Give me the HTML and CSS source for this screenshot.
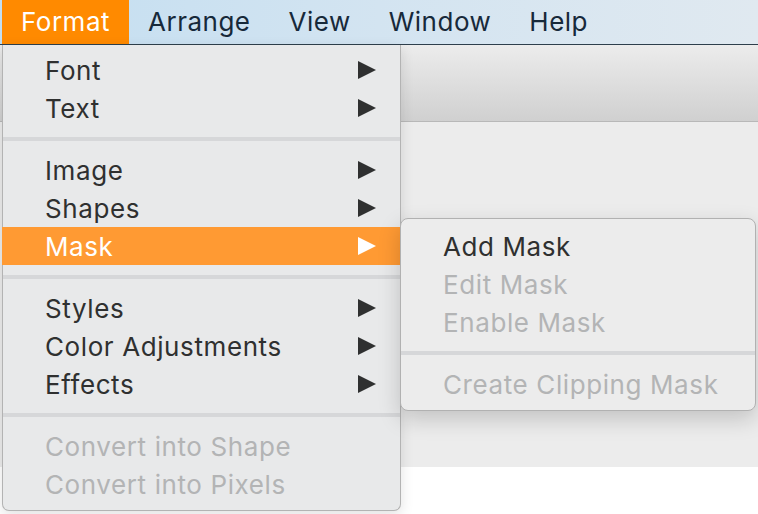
FILE: index.html
```html
<!DOCTYPE html>
<html>
<head>
<meta charset="utf-8">
<link rel="stylesheet" href="styles.css">
</head>
<body>
<div class="menubar">
  <div class="mb-item active">Format</div>
  <div class="mb-item">Arrange</div>
  <div class="mb-item">View</div>
  <div class="mb-item">Window</div>
  <div class="mb-item">Help</div>
</div>
<div class="window">
  <div class="toolbar"></div>
  <div class="canvas"></div>
</div>

<div class="menu">
  <div class="row"><span>Font</span><span class="arrow"></span></div>
  <div class="row"><span>Text</span><span class="arrow"></span></div>
  <div class="sep"></div>
  <div class="row"><span>Image</span><span class="arrow"></span></div>
  <div class="row"><span>Shapes</span><span class="arrow"></span></div>
  <div class="row selected"><span>Mask</span><span class="arrow"></span>
    <div class="submenu">
      <div class="row"><span>Add Mask</span></div>
      <div class="row disabled"><span>Edit Mask</span></div>
      <div class="row disabled"><span>Enable Mask</span></div>
      <div class="sep"></div>
      <div class="row disabled"><span>Create Clipping Mask</span></div>
    </div>
  </div>
  <div class="sep"></div>
  <div class="row"><span>Styles</span><span class="arrow"></span></div>
  <div class="row"><span>Color Adjustments</span><span class="arrow"></span></div>
  <div class="row"><span>Effects</span><span class="arrow"></span></div>
  <div class="sep"></div>
  <div class="row disabled"><span>Convert into Shape</span></div>
  <div class="row disabled"><span>Convert into Pixels</span></div>
</div>
</body>
</html>
```
FILE: styles.css
```css
html, body {
  margin: 0;
  padding: 0;
  width: 758px;
  height: 514px;
  overflow: hidden;
  background: #ffffff;
  font-family: "Inter", "Liberation Sans", sans-serif;
  position: relative;
}

.menubar {
  height: 44px;
  display: flex;
  padding-left: 2px;
  background: linear-gradient(to right, #c3def1 0%, #d3e4f1 50%, #e0e9f0 100%);
  border-bottom: 1px solid #2e3f4c;
}

.mb-item {
  padding: 0 19px;
  font-size: 26px;
  letter-spacing: 0.5px;
  line-height: 44px;
  color: #17293a;
}

.mb-item.active {
  background: #ff8a00;
  color: #ffffff;
}

.window {
  display: flex;
  flex-direction: column;
}

.toolbar {
  height: 76px;
  background: linear-gradient(to bottom, #ececec 0%, #d0d0d0 100%);
  border-bottom: 1px solid #b8b8b8;
}

.canvas {
  height: 345px;
  background: #ececec;
}

.menu {
  position: absolute;
  left: 2px;
  top: 45px;
  width: 397px;
  padding: 6px 0 7px;
  background: #e8e9ea;
  border: 1px solid #b3b3b3;
  border-top: none;
  border-radius: 0 0 7px 7px;
  box-shadow: 0 4px 14px rgba(0,0,0,0.12);
}

.row {
  position: relative;
  height: 38px;
  display: flex;
  align-items: center;
  justify-content: space-between;
  padding: 0 24px 0 42px;
  font-size: 26px;
  letter-spacing: 0.6px;
  color: #2f3030;
}

.row.selected {
  background: #ff9a33;
  color: #ffffff;
  margin-left: -1px;
  padding-left: 43px;
}

.row.disabled {
  color: #b3b4b5;
}

.arrow {
  width: 0;
  height: 0;
  border-top: 9.5px solid transparent;
  border-bottom: 9.5px solid transparent;
  border-left: 18px solid #2f3030;
}

.selected .arrow {
  border-left-color: #ffffff;
}

.sep {
  height: 24px;
  display: flex;
  align-items: center;
}

.sep::before {
  content: "";
  flex: 1;
  height: 4px;
  background: #d6d7d9;
  margin-top: -1px;
}

.submenu {
  position: absolute;
  left: 398px;
  top: -9px;
  width: 354px;
  padding: 8px 0 7px;
  background: #ececec;
  border: 1px solid #b1b1b1;
  border-radius: 8px;
  box-shadow: 0 8px 22px rgba(0,0,0,0.18);
}

.submenu .row {
  padding-left: 42px;
}
```
